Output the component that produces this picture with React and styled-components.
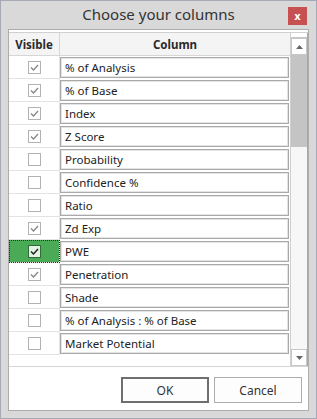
import React, { useState } from 'react';
import styled, { createGlobalStyle } from 'styled-components';

const GlobalStyle = createGlobalStyle`
  html, body {
    margin: 0;
    padding: 0;
    background: #ffffff;
  }
  * {
    box-sizing: border-box;
  }
`;

const Window = styled.div`
  width: 317px;
  height: 419px;
  border: 1px solid #a4a9b3;
  background: #d9d9d9;
  display: flex;
  flex-direction: column;
  font-family: 'Noto Sans', 'Open Sans', sans-serif;
  font-size: 11.5px;
  color: #222;
`;

const TitleBar = styled.div`
  height: 28px;
  display: grid;
  grid-template-columns: 1fr auto 1fr;
  align-items: center;
`;

const Title = styled.div`
  grid-column: 2;
  font-size: 15px;
  color: #333;
  padding-bottom: 2px;
`;

const CloseButton = styled.div`
  grid-column: 3;
  justify-self: end;
  align-self: start;
  margin: 6px 9px 0 0;
  width: 19px;
  height: 18px;
  background: #c75050;
  color: #fff;
  font-family: 'DejaVu Sans', sans-serif;
  font-weight: bold;
  font-size: 10px;
  display: flex;
  align-items: center;
  justify-content: center;
`;

const Content = styled.div`
  flex: 1;
  margin: 0 7px 7px 7px;
  border: 1px solid #adadad;
  background: #fff;
  padding-top: 2px;
  display: flex;
  flex-direction: column;
`;

const Grid = styled.div`
  height: 335px;
  display: flex;
  border-top: 1px solid #d0d0d0;
  border-bottom: 1px solid #d6d6d6;
  overflow: hidden;
`;

const Table = styled.div`
  width: 281px;
  display: flex;
  flex-direction: column;
`;

const HeaderRow = styled.div`
  display: grid;
  grid-template-columns: 51px 230px;
  height: 23px;
  background: #f4f4f4;
  border-bottom: 1px solid #d6d6d6;
  font-weight: bold;
  color: #2a2a2a;
`;

const HeaderCell = styled.div`
  display: flex;
  align-items: center;
  justify-content: center;
  border-right: ${(p) => (p.$last ? 'none' : '1px solid #d6d6d6')};
`;

const Row = styled.div`
  display: grid;
  grid-template-columns: 51px 230px;
  height: 23px;
`;

const VisibleCell = styled.div`
  display: flex;
  align-items: center;
  justify-content: center;
  border-bottom: 1px solid #e3e3e3;
  border-right: 1px solid #e3e3e3;
  background: ${(p) => (p.$selected ? '#4aaa55' : 'transparent')};
  outline: ${(p) => (p.$selected ? '1px dotted #3a1f3a' : 'none')};
  outline-offset: -1px;
`;

const Box = styled.div`
  width: 13px;
  height: 13px;
  border: 1px solid ${(p) => (p.$selected ? '#2f6b36' : '#b2b2b2')};
  background: ${(p) => (p.$selected ? '#e2f3e4' : '#fff')};
  display: flex;
  align-items: center;
  justify-content: center;
`;

const ColumnCell = styled.div`
  padding: 1px 1px 0 0;
`;

const TextBox = styled.div`
  height: 21px;
  border: 1px solid #a9a9a9;
  box-shadow: inset 0 0 0 1px #e4e4e4;
  padding: 0 4px;
  display: flex;
  align-items: center;
  white-space: nowrap;
  color: #222;
`;

const ScrollBar = styled.div`
  width: 18px;
  display: flex;
  flex-direction: column;
  border-left: 1px solid #d0d0d0;
  border-right: 1px solid #a8a8a8;
  background: #f4f4f4;
`;

const ScrollCap = styled.div`
  height: 5px;
  background: #fff;
  border-bottom: 1px solid #c6c6c6;
`;

const ScrollButton = styled.div`
  height: 17px;
  background: #fff;
  border: 1px solid #c8c8c8;
  display: flex;
  align-items: center;
  justify-content: center;
`;

const Thumb = styled.div`
  height: 92px;
  background: #c4c4c4;
`;

const Track = styled.div`
  flex: 1;
  background: #f7f7f7;
`;

const Footer = styled.div`
  flex: 1;
  display: flex;
  justify-content: flex-end;
  align-items: flex-start;
  gap: 5px;
  padding: 10px 6px 0 0;
`;

const Button = styled.button`
  width: 88px;
  height: 26px;
  background: #fdfdfd;
  border: ${(p) => (p.$default ? '2px solid #6f6f6f' : '1px solid #adadad')};
  font-family: 'Noto Sans', 'Open Sans', sans-serif;
  font-size: 12px;
  color: #333;
  padding: 0;
`;

const Check = ({ dark }) => (
  <svg width="11" height="11" viewBox="0 0 11 11">
    <path
      d="M2 5.5 L4.5 8 L9 3"
      fill="none"
      stroke={dark ? '#222' : '#858585'}
      strokeWidth={dark ? 1.5 : 1.25}
    />
  </svg>
);

const Arrow = ({ down }) => (
  <svg width="7" height="4" viewBox="0 0 7 4">
    <path d={down ? 'M0 0 L7 0 L3.5 4 Z' : 'M0 4 L7 4 L3.5 0 Z'} fill="#666" />
  </svg>
);

const columns = [
  { name: '% of Analysis', visible: true },
  { name: '% of Base', visible: true },
  { name: 'Index', visible: true },
  { name: 'Z Score', visible: true },
  { name: 'Probability', visible: false },
  { name: 'Confidence %', visible: false },
  { name: 'Ratio', visible: false },
  { name: 'Zd Exp', visible: true },
  { name: 'PWE', visible: true },
  { name: 'Penetration', visible: true },
  { name: 'Shade', visible: false },
  { name: '% of Analysis : % of Base', visible: false },
  { name: 'Market Potential', visible: false },
];

const App = () => {
  const [rows] = useState(columns);
  const selected = 8;

  return (
    <Window>
      <GlobalStyle />
      <TitleBar>
        <Title>Choose your columns</Title>
        <CloseButton>x</CloseButton>
      </TitleBar>
      <Content>
        <Grid>
          <Table>
            <HeaderRow>
              <HeaderCell>Visible</HeaderCell>
              <HeaderCell $last>Column</HeaderCell>
            </HeaderRow>
            {rows.map((row, i) => (
              <Row key={row.name}>
                <VisibleCell $selected={i === selected}>
                  <Box $selected={i === selected}>
                    {row.visible && <Check dark={i === selected} />}
                  </Box>
                </VisibleCell>
                <ColumnCell>
                  <TextBox>{row.name}</TextBox>
                </ColumnCell>
              </Row>
            ))}
          </Table>
          <ScrollBar>
            <ScrollCap />
            <ScrollButton>
              <Arrow />
            </ScrollButton>
            <Thumb />
            <Track />
            <ScrollButton>
              <Arrow down />
            </ScrollButton>
          </ScrollBar>
        </Grid>
        <Footer>
          <Button $default>OK</Button>
          <Button>Cancel</Button>
        </Footer>
      </Content>
    </Window>
  );
};

export default App;
